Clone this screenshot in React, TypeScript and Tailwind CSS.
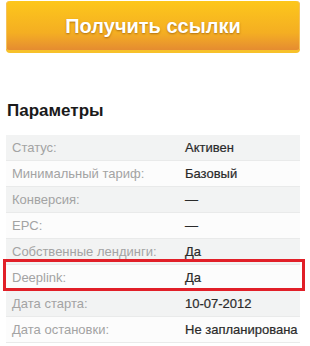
const rows = [
  { label: 'Статус:', value: 'Активен' },
  { label: 'Минимальный тариф:', value: 'Базовый' },
  { label: 'Конверсия:', value: '—' },
  { label: 'EPC:', value: '—' },
  { label: 'Собственные лендинги:', value: 'Да' },
  { label: 'Deeplink:', value: 'Да', marked: true },
  { label: 'Дата старта:', value: '10-07-2012' },
  { label: 'Дата остановки:', value: 'Не запланирована' },
];

export default function App() {
  return (
    <div className="w-[310px] h-[346px] bg-white overflow-hidden font-['Liberation_Sans',Arial,sans-serif]">
      {/* Button */}
      <div className="px-[6px] pt-[1px] pr-[10px]">
        <button className="w-full h-[52px] rounded-[4px] bg-gradient-to-b from-[#fdc71b] via-[#f4ae22] via-65% to-[#e58c30] border-b-[3px] border-[#f7c12a] flex items-center justify-center shadow-[inset_-1px_0_0_#f6c25a,inset_1px_0_0_#f6c25a]">
          <span className="text-white text-[20px] font-bold [text-shadow:0_1px_2px_rgba(120,60,0,0.55)]">
            Получить ссылки
          </span>
        </button>
      </div>

      {/* Heading */}
      <h2 className="mt-[49px] ml-[7px] text-[17px] font-bold text-[#1a1a1a] leading-none">Параметры</h2>

      {/* Table */}
      <div className="mt-[16px] ml-[6px] w-[294px]">
        {rows.map((r, i) => (
          <div
            key={r.label}
            className={`relative flex items-center h-[26px] border-b border-[#e9eaea] text-[13px] ${
              i % 2 === 0 ? 'bg-[#f2f3f3]' : 'bg-[#fcfcfc]'
            }`}
          >
            <span className="w-[179px] pl-[6px] text-[#a3a3a3]">{r.label}</span>
            <span className="text-[#2a2a2a] [-webkit-text-stroke:0.2px_#2a2a2a]">{r.value}</span>
            {r.marked && (
              <span className="absolute -left-[3px] -right-[5px] -top-[6px] -bottom-[1px] border-[3px] border-[#e11f28] pointer-events-none" />
            )}
          </div>
        ))}
      </div>
    </div>
  );
}
